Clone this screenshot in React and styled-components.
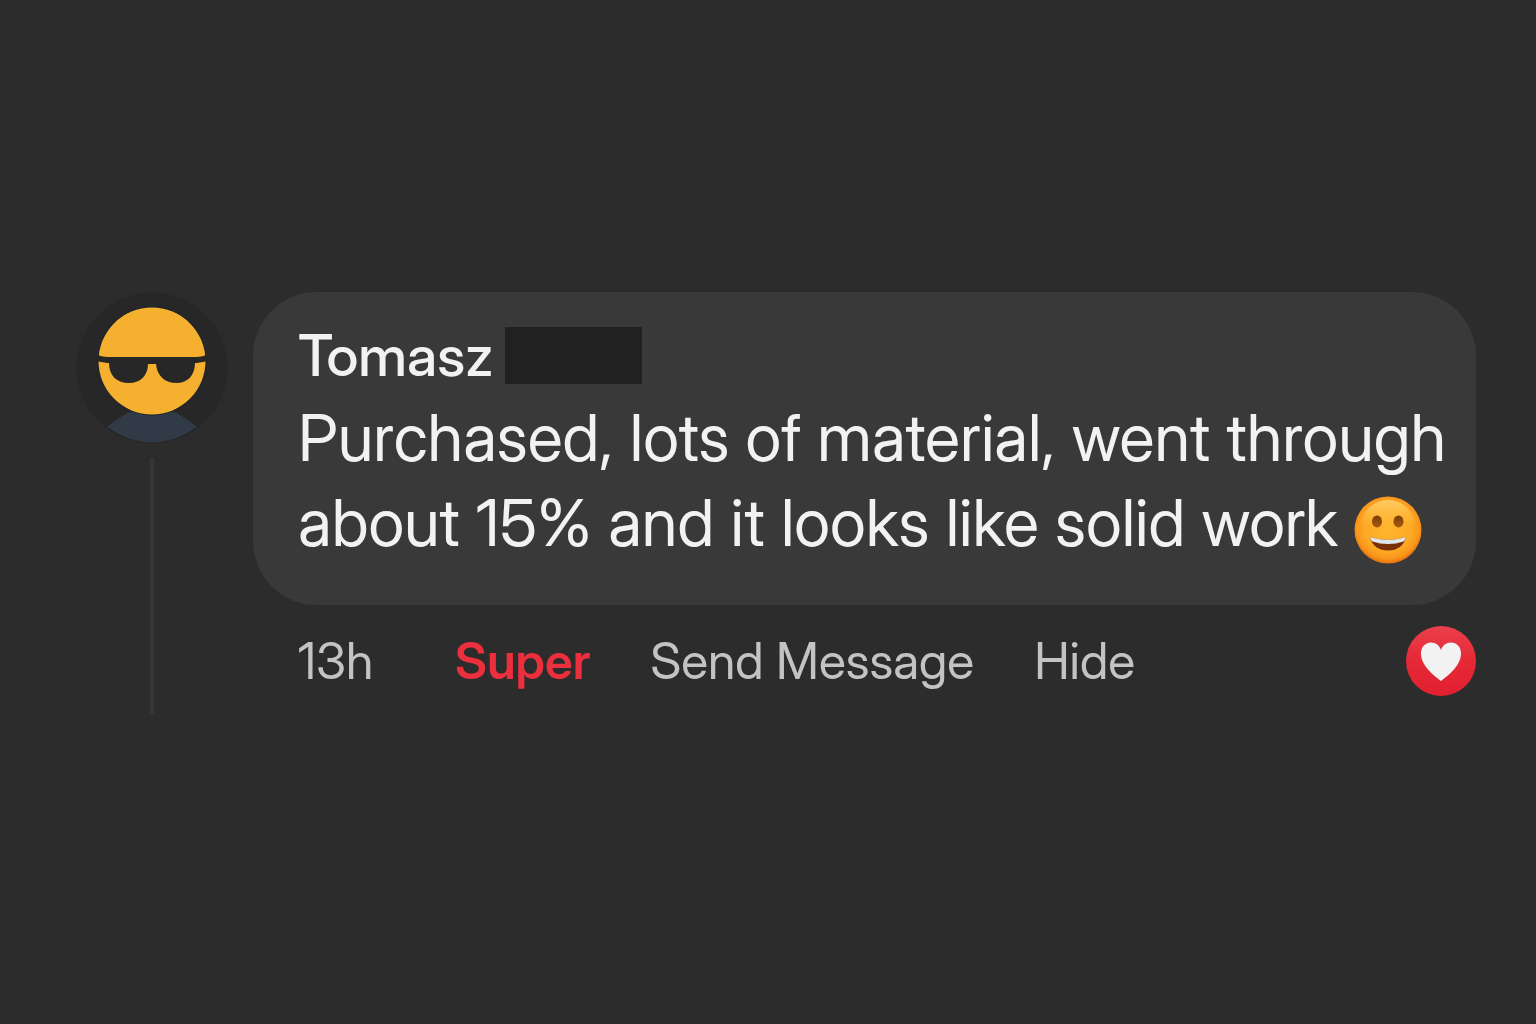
import React from "react"
import styled, { createGlobalStyle } from "styled-components"

const colors = {
  page: "#2c2c2c",
  bubble: "#393939",
  redacted: "#212121",
  thread: "#353535",
  text: "#f2f2f2",
  muted: "#c3c3c3",
  accent: "#ec2f3d",
}

const GlobalStyle = createGlobalStyle`
  * {
    box-sizing: border-box;
  }

  body {
    margin: 0;
    background-color: ${colors.page};
    color: ${colors.text};
    font-family: "Inter Display", Inter, "Liberation Sans", sans-serif;
  }
`

const Page = styled.main`
  min-height: 100vh;
  padding: 292px 60px 60px 76px;
`

const Comment = styled.article`
  display: flex;
  gap: 25px;
`

const AvatarColumn = styled.div`
  flex: none;
  width: 152px;
  display: flex;
  flex-direction: column;
  align-items: center;
  gap: 14px;

  svg {
    display: block;
  }
`

const ThreadLine = styled.div`
  flex: 1;
  width: 4px;
  background-color: ${colors.thread};
`

const Content = styled.div`
  flex: 1;
  min-width: 0;
  padding-bottom: 18px;
`

const Bubble = styled.div`
  padding: 35px 24px 40px 45px;
  border-radius: 64px;
  background-color: ${colors.bubble};
`

const AuthorRow = styled.header`
  display: flex;
  align-items: center;
  gap: 12px;
  height: 57px;
  margin-bottom: 11px;
`

const Author = styled.h2`
  margin: 0;
  font-size: 57px;
  font-weight: 500;
  line-height: 57px;
`

const RedactedName = styled.span`
  width: 137px;
  height: 57px;
  background-color: ${colors.redacted};
`

const Message = styled.p`
  margin: 0;
  font-size: 65px;
  line-height: 85px;

  svg {
    vertical-align: -18px;
  }
`

const Footer = styled.footer`
  display: flex;
  align-items: center;
  justify-content: space-between;
  margin-top: 21px;
  padding-left: 45px;

  svg {
    flex: none;
    display: block;
  }
`

const Actions = styled.div`
  display: flex;
  align-items: center;
  gap: 60px;
  font-size: 50px;
  line-height: 60px;
  color: ${colors.muted};
`

const Timestamp = styled.time`
  min-width: 97px;
`

const Action = styled.button`
  padding: 0;
  border: 0;
  background: none;
  font: inherit;
  font-weight: ${(props) => props.$active ? 600 : 400};
  color: ${(props) => props.$active ? colors.accent : "inherit"};
  cursor: pointer;
`

const Avatar = () => (
  <svg width="152" height="152" viewBox="0 0 152 152" role="img" aria-label="Tomasz">
    <circle cx="76" cy="76" r="75.5" fill="#272727" />
    <path d="M31 134.5 Q41 127 51 121 Q76 115 101 121 Q111 127 121 134.5 Q101 150 76 150.5 Q51 150 31 134.5Z" fill="#303b47" />
    <circle cx="76" cy="69" r="54.5" fill="#1c2230" />
    <circle cx="76" cy="69" r="53.5" fill="#f5b02f" />
    <path
      d="M20 62 Q25 65 32 65 H120 Q127 65 132 62 V69 Q127 70 121 71 H119 C119 84 111 91 100.5 91 C89 91 81 84 80 72 H72 C72 84 64 91 53 91 C41 91 33 84 33 71 H31 Q25 70 20 69Z"
      fill="#272727"
    />
  </svg>
)

const Smiley = () => (
  <svg width="68" height="68" viewBox="0 0 68 68" role="img" aria-label="grinning face">
    <defs>
      <radialGradient id="smiley-face" cx="50%" cy="46%" r="54%">
        <stop offset="0" stopColor="#ffb52f" />
        <stop offset="0.65" stopColor="#fdaa26" />
        <stop offset="0.87" stopColor="#f9961a" />
        <stop offset="1" stopColor="#e9700f" />
      </radialGradient>
      <linearGradient id="smiley-shine" x1="0" y1="0" x2="0" y2="1">
        <stop offset="0" stopColor="#ffe08a" stopOpacity="0.65" />
        <stop offset="0.5" stopColor="#ffd35c" stopOpacity="0" />
      </linearGradient>
      <linearGradient id="smiley-eye" x1="0" y1="0" x2="0" y2="1">
        <stop offset="0" stopColor="#793d08" />
        <stop offset="1" stopColor="#a65b0b" />
      </linearGradient>
    </defs>
    <circle cx="34" cy="34" r="33.5" fill="url(#smiley-face)" />
    <ellipse cx="34" cy="29" rx="27" ry="25" fill="url(#smiley-shine)" />
    <ellipse cx="23" cy="25.5" rx="5" ry="6" fill="url(#smiley-eye)" />
    <ellipse cx="44.5" cy="25.5" rx="5" ry="6" fill="url(#smiley-eye)" />
    <path d="M16 41 Q34 47 52 41 C50 50 43 54.5 34 54.5 C25 54.5 18 50 16 41Z" fill="#793007" />
    <path d="M16 41 Q34 47 52 41 Q51.5 44 49.5 45.5 Q34 50.5 18.5 45.5 Q16.5 44 16 41Z" fill="#dfe6ea" />
  </svg>
)

const HeartBadge = () => (
  <svg width="70" height="70" viewBox="0 0 70 70" role="img" aria-label="Love">
    <defs>
      <linearGradient id="heart-fill" x1="0" y1="0" x2="0" y2="1">
        <stop offset="0" stopColor="#ea404b" />
        <stop offset="0.5" stopColor="#e52936" />
        <stop offset="1" stopColor="#e2202f" />
      </linearGradient>
    </defs>
    <circle cx="35" cy="35" r="35" fill="url(#heart-fill)" />
    <path
      d="M35 55 C28 49.5 15 40 15 27.5 C15 20.5 19.5 16.5 25 16.5 C30 16.5 33.5 19.5 35 24 C36.5 19.5 40 16.5 45 16.5 C50.5 16.5 55 20.5 55 27.5 C55 40 42 49.5 35 55Z"
      fill="#f2f2f2"
    />
  </svg>
)

const App = () => (
  <>
    <GlobalStyle />
    <Page>
      <Comment>
        <AvatarColumn>
          <Avatar />
          <ThreadLine />
        </AvatarColumn>

        <Content>
          <Bubble>
            <AuthorRow>
              <Author>Tomasz</Author>
              <RedactedName />
            </AuthorRow>
            <Message>
              Purchased, lots of material, went through about 15% and it looks like solid work <Smiley />
            </Message>
          </Bubble>

          <Footer>
            <Actions>
              <Timestamp>13h</Timestamp>
              <Action type="button" $active>Super</Action>
              <Action type="button">Send Message</Action>
              <Action type="button">Hide</Action>
            </Actions>
            <HeartBadge />
          </Footer>
        </Content>
      </Comment>
    </Page>
  </>
)

export default App
